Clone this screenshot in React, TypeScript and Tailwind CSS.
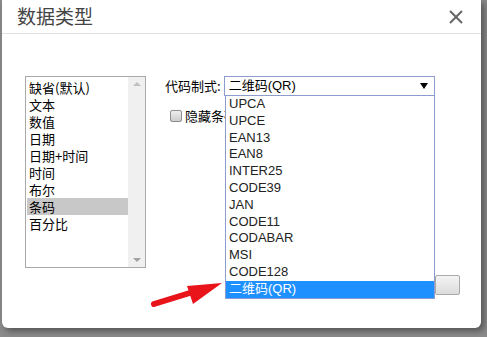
const listItems = ['缺省(默认)', '文本', '数值', '日期', '日期+时间', '时间', '布尔', '条码', '百分比']

const codeTypes = [
  'UPCA',
  'UPCE',
  'EAN13',
  'EAN8',
  'INTER25',
  'CODE39',
  'JAN',
  'CODE11',
  'CODABAR',
  'MSI',
  'CODE128',
  '二维码(QR)',
]

const cjk = "font-['SimSun','Noto_Sans_CJK_SC',sans-serif]"
const mixed = "font-['Liberation_Sans','Noto_Sans_CJK_SC',sans-serif]"

function CloseIcon() {
  return (
    <svg width="16" height="16" viewBox="0 0 16 16" className="text-[#666]">
      <path d="M2 2 L14 14 M14 2 L2 14" stroke="currentColor" strokeWidth="2" />
    </svg>
  )
}

function TypeList() {
  return (
    <div className="relative flex h-[192px] w-[121px] border border-[#a9a9a9] bg-white">
      <div className="flex flex-1 flex-col py-[2px] pl-[1px]">
        {listItems.map((label) => (
          <div
            key={label}
            className={`h-[17px] overflow-hidden pl-[2px] text-[13px] leading-[17px] text-black ${cjk} ${
              label === '条码' ? 'bg-[#c8c8c8]' : ''
            }`}
          >
            {label}
          </div>
        ))}
      </div>
      <div className="flex w-[17px] flex-col justify-between bg-[#f0f0f0] py-[5px]">
        <span className="mx-auto h-0 w-0 border-x-[4px] border-b-[4px] border-x-transparent border-b-[#c0c0c0]" />
        <span className="mx-auto h-0 w-0 border-x-[4px] border-t-[4px] border-x-transparent border-t-[#a0a0a0]" />
      </div>
    </div>
  )
}

function Arrow() {
  return (
    <svg width="90" height="40" viewBox="0 0 90 40" className="absolute left-[145px] top-[275px]">
      <path d="M9 29 L48 17" stroke="#e8141a" strokeWidth="6" strokeLinecap="round" />
      <path d="M77 8 L42 11 L48 29 Z" fill="#e8141a" />
    </svg>
  )
}

export default function App() {
  return (
    <div className="relative h-[337px] w-[487px] overflow-hidden bg-[#8a8a8a]">
      <div className="absolute left-[2px] top-0 h-[328px] w-[479px] rounded-b-[6px] bg-white shadow-[3px_3px_6px_rgba(0,0,0,0.4)]">
        <div className="flex h-[34px] items-center justify-between border-b border-[#e0e0e0] pl-[15px] pr-[17px]">
          <span className={`text-[19px] text-[#444] ${cjk}`}>数据类型</span>
          <CloseIcon />
        </div>
        <div className="flex pl-[23px] pt-[42px]">
          <TypeList />
          <div className="ml-[19px] flex flex-col">
            <div className="flex items-center">
              <span className={`text-[13px] text-black ${cjk}`}>代码制式:</span>
              <div className="relative ml-[3px] flex h-[20px] w-[211px] items-center justify-between border border-[#8c9ccf] pl-[4px] pr-[6px]">
                <span className={`text-[13px] text-black ${mixed}`}>二维码(QR)</span>
                <span className="h-0 w-0 border-x-[4px] border-t-[6px] border-x-transparent border-t-black" />
              </div>
            </div>
            <div className="ml-[5px] mt-[10px] flex items-center gap-[3px]">
              <span className="h-[12px] w-[12px] rounded-[2px] border border-[#8f8f8f] bg-gradient-to-b from-[#eee] to-[#ccc]" />
              <span className={`text-[13px] text-black ${cjk}`}>隐藏条码</span>
            </div>
            <div className="ml-[270px] mt-[149px] h-[20px] w-[25px] rounded-[2px] border border-[#aaa] bg-gradient-to-b from-[#f4f4f4] to-[#dcdcdc]" />
          </div>
        </div>
        <div className="absolute left-[223px] top-[96px] w-[210px] border border-t-0 border-[#8c9ccf] bg-white">
          {codeTypes.map((code) => (
            <div
              key={code}
              className={`h-[16.8px] overflow-hidden pl-[3px] text-[13px] leading-[16.8px] ${mixed} ${
                code === '二维码(QR)' ? 'bg-[#1e90ff] text-white' : 'text-[#222]'
              }`}
            >
              {code}
            </div>
          ))}
        </div>
      </div>
      <Arrow />
    </div>
  )
}
